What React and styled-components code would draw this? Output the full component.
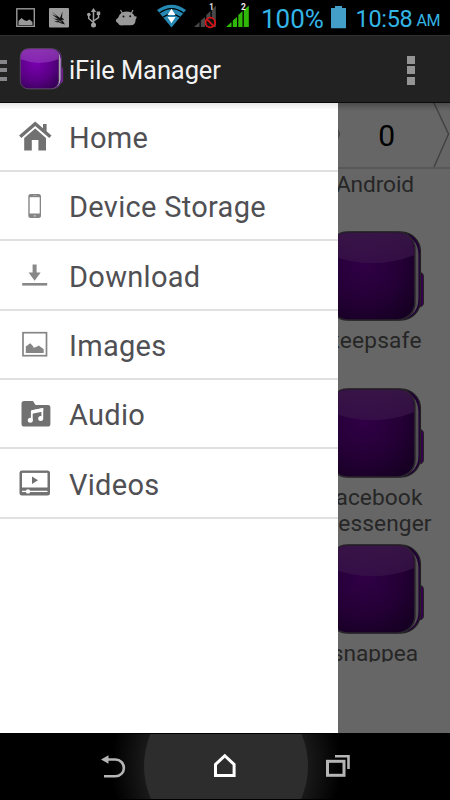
import React from "react";
import styled, { createGlobalStyle } from "styled-components";

const GlobalStyle = createGlobalStyle`
  body {
    margin: 0;
    background: #000;
    font-family: Roboto, "Liberation Sans", sans-serif;
  }
`;

const Screen = styled.div`
  width: 450px;
  height: 800px;
  display: flex;
  flex-direction: column;
  overflow: hidden;
  background: #000;
`;

const StatusBar = styled.div`
  height: 35px;
  display: flex;
  align-items: flex-start;
  background: #000;
`;

const StatusIcon = styled.svg`
  flex: none;
  display: block;
  margin-left: ${({ $left }) => $left}px;
`;

const StatusText = styled.div`
  flex: none;
  width: ${({ $width }) => $width}px;
  margin-left: ${({ $left }) => $left}px;
  padding-top: ${({ $top }) => $top}px;
  font-size: ${({ $size }) => $size}px;
  line-height: 28px;
  letter-spacing: ${({ $spacing }) => $spacing || 0}px;
  white-space: nowrap;
  color: #33b5e5;
`;

const ActionBar = styled.div`
  height: 68px;
  box-sizing: border-box;
  display: flex;
  align-items: center;
  background: #222;
  border-top: 1px solid #303030;
  border-bottom: 1px solid #0a0a0a;
`;

const DrawerHandle = styled.div`
  width: 7px;
  height: 21px;
  margin-right: 11px;
  padding-top: 2px;
  display: flex;
  flex-direction: column;
  justify-content: space-between;

  span {
    height: 4px;
    background: #86868a;
  }
`;

const Title = styled.div`
  flex: 1;
  padding-top: 1px;
  margin-left: 5px;
  font-size: 25.5px;
  letter-spacing: -0.1px;
  white-space: nowrap;
  color: #f3f3f3;
`;

const Overflow = styled.div`
  width: 8px;
  margin: 2px 35px 0 0;
  display: flex;
  flex-direction: column;
  gap: 2.5px;

  span {
    height: 8px;
    background: #949494;
  }
`;

const Content = styled.div`
  position: relative;
  height: 630px;
  display: flex;
  flex-direction: column;
  overflow: hidden;
  background: #fff;
`;

const Breadcrumb = styled.div`
  height: 66px;
  flex: none;
  box-sizing: border-box;
  display: flex;
  justify-content: flex-end;
  align-items: center;
  border-bottom: 2px solid #ddd;
`;

const Chevron = styled.svg`
  flex: none;
  width: 17px;
  height: 64px;
  fill: none;
  stroke: #a5a5a5;
  stroke-width: 1.5;
`;

const Crumb = styled.div`
  margin: 0 38px 0 37px;
  font-size: 30px;
  color: #000;
`;

const Grid = styled.div`
  height: 493px;
  flex: none;
  box-sizing: border-box;
  display: flex;
  flex-direction: column;
  overflow: hidden;
  margin-left: 300px;
  padding-top: 3px;
`;

const GridItem = styled.div`
  flex: none;
  height: ${({ $height }) => $height}px;
  display: flex;
  flex-direction: column;
  align-items: center;

  svg {
    flex: none;
  }
`;

const GridLabel = styled.div`
  padding-top: ${({ $top }) => $top || 0}px;
  font-size: 22.7px;
  line-height: 26px;
  letter-spacing: ${({ $spacing }) => $spacing || 0}px;
  white-space: pre;
  text-align: center;
  color: #606060;
`;

const Scrim = styled.div`
  position: absolute;
  inset: 0;
  background: linear-gradient(rgba(0, 0, 0, 0.25), rgba(0, 0, 0, 0) 8px),
    rgba(0, 0, 0, 0.6);
`;

const Drawer = styled.div`
  position: absolute;
  top: 0;
  left: 0;
  bottom: 0;
  width: 337.5px;
  background: linear-gradient(#e6e6e6, #fff 7px);
`;

const DrawerRow = styled.div`
  height: ${({ $first }) => ($first ? 69 : 69.35)}px;
  box-sizing: border-box;
  display: flex;
  align-items: center;
  border-bottom: 2px solid #e0e0e0;

  svg {
    flex: none;
    width: 36px;
    height: 36px;
    margin: 0 16px 0 17px;
  }
`;

const RowLabel = styled.div`
  padding-top: 3px;
  font-size: 29px;
  letter-spacing: 0.3px;
  white-space: nowrap;
  color: #505054;
`;

const NavBar = styled.div`
  height: 67px;
  background: #000;

  svg {
    display: block;
  }
`;

const PurpleIcon = ({ size, id }) => (
  <svg width={size} height={size} viewBox="0 0 100 100">
    <defs>
      <radialGradient id={id + "body"} cx="0.4" cy="0.35" r="0.75">
        <stop offset="0" stopColor="#7a00b0" />
        <stop offset="0.6" stopColor="#5a0085" />
        <stop offset="1" stopColor="#380058" />
      </radialGradient>
      <linearGradient id={id + "gloss"} x1="0" y1="0" x2="0" y2="1">
        <stop offset="0" stopColor="#9a44bd" />
        <stop offset="1" stopColor="#8a2fb5" />
      </linearGradient>
    </defs>
    <rect x="84" y="46" width="13.5" height="34" rx="4" fill="#8b00be" stroke="#55585a" strokeWidth="1" />
    <rect x="7" y="6" width="87.500" height="87" rx="19" fill="#560089" stroke="#555" strokeWidth="1.200" />
    <path d="M72 8q20 2 20.500 20v44q0 16-16 20h-6z" fill="#cbc6ce" />
    <rect x="5" y="6" width="84" height="87" rx="17" fill={`url(#${id}body)`} stroke="#66596c" strokeWidth="1.500" />
    <path d="M6 29V23Q7 7 23 7h49q15 0 16 16v6Q47 45 6 29z" fill={`url(#${id}gloss)`} opacity="0.75" />
  </svg>
);

const HomeIcon = () => (
  <svg viewBox="0 0 36 36" fill="#717171">
    <path d="M18.200 2.500 26 9.200V5h3.600v7.300l4.900 4.300-2.200 2.400L18.200 7 4.300 19l-2.200-2.400z" />
    <path d="M18.200 9.500 29 19v12.500h-7.600V21h-6.600v10.500H7.200V19z" />
  </svg>
);

const PhoneIcon = () => (
  <svg viewBox="0 0 36 36">
    <rect x="11.300" y="6" width="12.700" height="24" rx="2.500" fill="#858585" />
    <rect x="12.700" y="9.200" width="10" height="16.300" fill="#fff" />
    <rect x="16" y="7.200" width="3.500" height="0.800" fill="#aaa" />
    <rect x="16.500" y="27.200" width="2.500" height="1.300" rx="0.600" fill="#c5c5c5" />
  </svg>
);

const DownloadIcon = () => (
  <svg viewBox="0 0 36 36" fill="#888">
    <path d="M15.600 7.500h4v8h4L17.600 23.700l-6-8.200h4z" />
    <rect x="5.200" y="26" width="25" height="2.600" />
  </svg>
);

const ImageIcon = () => (
  <svg viewBox="0 0 36 36">
    <rect x="6" y="6.700" width="23.500" height="23" fill="#fff" stroke="#858585" strokeWidth="1.700" />
    <path d="M8.800 27v-6.500l4.400-3.200 2.500 2.500 1 2 3-1 2-1.200 5 3.700V27z" fill="#858585" />
  </svg>
);

const AudioIcon = () => (
  <svg viewBox="0 0 36 36">
    <path d="M7 5h9l2.500 4H31q2.400 0 2.400 2.300v16.400Q33.400 30.500 31 30.500H7q-2.500 0-2.500-2.800V7.500Q4.500 5 7 5z" fill="#717171" />
    <path d="M14.800 15.200 25.300 13v9.200M14.800 24V15.200" fill="none" stroke="#fff" strokeWidth="1.800" />
    <path d="M14 14.500 26.200 12v3.500L14 18z" fill="#fff" />
    <circle cx="13.300" cy="24.200" r="2.500" fill="#fff" />
    <circle cx="23.700" cy="22.600" r="2.500" fill="#fff" />
  </svg>
);

const VideoIcon = () => (
  <svg viewBox="0 0 36 36">
    <rect x="2.500" y="5.500" width="30.500" height="25" rx="2.500" fill="#717171" />
    <rect x="5" y="7.900" width="25.500" height="14.600" fill="#fff" />
    <path d="M15 11.400v7.500l6-3.700z" fill="#717171" />
    <path d="M5 26.400h25.500" stroke="#fff" strokeWidth="1.300" />
    <circle cx="11" cy="26.400" r="2.200" fill="#fff" />
  </svg>
);

const menu = [
  { label: "Home", icon: <HomeIcon /> },
  { label: "Device Storage", icon: <PhoneIcon /> },
  { label: "Download", icon: <DownloadIcon /> },
  { label: "Images", icon: <ImageIcon /> },
  { label: "Audio", icon: <AudioIcon /> },
  { label: "Videos", icon: <VideoIcon /> },
];

const App = () => {
  return (
    <>
      <GlobalStyle />
      <Screen>
        <StatusBar>
          <StatusIcon $left={16} width="19" height="35">
            <rect x="0.800" y="8.800" width="17.500" height="17.500" fill="none" stroke="#999" strokeWidth="1.400" />
            <path d="M2.500 25v-4l3-3 2.500 2 2.500 1 3-1.500 3 2.500v3z" fill="#999" />
          </StatusIcon>
          <StatusIcon $left={14} width="20" height="35">
            <rect x="0" y="8" width="20" height="19.500" rx="1" fill="#9d9d9d" />
            <path d="M2.500 11.500 11 18l2.500-6.500-.5 6 2 2-1.500 1 2.500 4-5-1.500-6-1.500 4.500-.5-5-2.500 4.500.5-6-4.500 5 2z" fill="#111" />
            <path d="M6 24.500 14 20M9 19.500l3 3" stroke="#9d9d9d" strokeWidth="0.600" />
          </StatusIcon>
          <StatusIcon $left={18} width="14" height="35" fill="none" stroke="#a2a2a2" strokeWidth="1.500">
            <path d="M6.500 11v13M6.500 22.500 1.700 18.500V15M6.500 21l5-3.500V14" />
            <path d="m3.800 12 2.700-4 2.700 4z" fill="#a2a2a2" stroke="none" />
            <circle cx="6.500" cy="25" r="2.500" fill="#a2a2a2" stroke="none" />
            <circle cx="1.800" cy="14.500" r="1.800" fill="#a2a2a2" stroke="none" />
            <rect x="9.700" y="11.500" width="3.500" height="3.500" fill="#a2a2a2" stroke="none" />
          </StatusIcon>
          <StatusIcon $left={15} width="22" height="35">
            <path d="m4.500 10 2.500 4M17 10l-2 4" stroke="#999" strokeWidth="1.200" />
            <path d="M0 21.500q-.5-2.500 2-3.500Q4 11.500 10.300 11.500q6.200 0 8.500 5 2-1 1.800 1-.2 1-1 2 .2 5.500-5 5.700-4 .3-7.600 0-3.500.8-5-2Z" fill="#999" />
            <circle cx="7.500" cy="16.500" r="1" fill="#111" />
            <circle cx="14.200" cy="16.200" r="1" fill="#111" />
          </StatusIcon>
          <StatusIcon $left={19} width="30" height="35">
            <path d="M0 10Q14.500-.5 29 10L14.500 27.500z" fill="#2589b4" />
            <path d="M2.500 13q12-8.800 24 0M6 17.300q8.500-6.300 17 0" fill="none" stroke="#000" strokeWidth="1.200" />
            <path d="m14.500 8.700 4 6.300h-8zM14.500 23.300l4-6.300h-8z" fill="#fff" />
          </StatusIcon>
          <StatusIcon $left={7} width="26" height="35">
            <path d="M0 27 5.500 22v5zM6.800 20.500 11 17v10H6.800zM12.300 15 16.500 11v16h-4.200zM17.800 10l4-4.500V27h-4z" fill="#484848" />
            <circle cx="16.300" cy="22.500" r="4.800" fill="#111" stroke="#d81418" strokeWidth="1.800" />
            <path d="m13 19.300 6.500 6.500" stroke="#d81418" strokeWidth="1.800" />
            <text x="15" y="10.300" fontSize="8.500" fontWeight="700" fill="#ddd">1</text>
          </StatusIcon>
          <StatusIcon $left={6} width="26" height="35">
            <path d="M0 27 5.500 22v5zM6.800 20.500 11 17v10H6.800zM12.300 15 16.500 11v16h-4.200zM17.800 10l5-4.500V27h-5z" fill="#30b808" />
            <text x="15" y="10.300" fontSize="8.500" fontWeight="700" fill="#eee">2</text>
          </StatusIcon>
          <StatusText $left={9} $width={64} $top={5} $size={26}>100%</StatusText>
          <StatusIcon $left={6} width="16" height="35">
            <path d="M0 8h4V6h7v2h4v20.200H0z" fill="#439fc8" />
          </StatusIcon>
          <StatusText $left={8.5} $width={56} $top={5} $size={23.5} $spacing={-0.3}>10:58</StatusText>
          <StatusText $left={5} $width={26} $top={7} $size={16} $spacing={-0.4}>AM</StatusText>
        </StatusBar>
        <ActionBar>
          <DrawerHandle>
            <span />
            <span />
            <span />
          </DrawerHandle>
          <PurpleIcon size={46} id="app" />
          <Title>iFile Manager</Title>
          <Overflow>
            <span />
            <span />
            <span />
          </Overflow>
        </ActionBar>
        <Content>
          <Breadcrumb>
            <Chevron viewBox="0 0 17 64">
              <path d="M1 0l14.500 31L1 64" />
            </Chevron>
            <Crumb>0</Crumb>
            <Chevron viewBox="0 0 17 64">
              <path d="M1 0l14.500 31L1 64" />
            </Chevron>
          </Breadcrumb>
          <Grid>
            <GridItem $height={54}>
              <GridLabel $spacing={-0.1}>Android</GridLabel>
            </GridItem>
            <GridItem $height={157}>
              <PurpleIcon size={101} id="g1" />
              <GridLabel $top={1} $spacing={0.2}>keepsafe</GridLabel>
            </GridItem>
            <GridItem $height={156}>
              <PurpleIcon size={101} id="g2" />
              <GridLabel $top={1} $spacing={0.1}>{"facebook\nmessenger"}</GridLabel>
            </GridItem>
            <GridItem $height={157}>
              <PurpleIcon size={101} id="g3" />
              <GridLabel $top={1}>snappea</GridLabel>
            </GridItem>
          </Grid>
          <Scrim />
          <Drawer>
            {menu.map((item, i) => (
              <DrawerRow key={item.label} $first={i === 0}>
                {item.icon}
                <RowLabel>{item.label}</RowLabel>
              </DrawerRow>
            ))}
          </Drawer>
        </Content>
        <NavBar>
          <svg width="450" height="67" viewBox="0 0 450 67">
            <defs>
              <radialGradient id="glow" gradientUnits="userSpaceOnUse" cx="226" cy="33" r="115">
                <stop offset="0.700" stopColor="#1a1a1a" />
                <stop offset="1" stopColor="#000" />
              </radialGradient>
            </defs>
            <rect y="1" width="450" height="66" fill="url(#glow)" />
            <circle cx="226" cy="33" r="82" fill="#2d2d2d" />
            <path d="M0 .5h450M0 66.500h450" stroke="#000" />
            <path d="M105 26.500h10.500a8.400 8.400 0 0 1 0 16.800H104" fill="none" stroke="#b5b5b5" strokeWidth="2.600" />
            <path d="M101 26.500l7.500-4.200v8.400z" fill="#b5b5b5" />
            <path d="M215.500 42.500V31.500l9.300-8.800 9.300 8.800v11z" fill="none" stroke="#fff" strokeWidth="3" />
            <rect x="327.500" y="28.300" width="16.500" height="14" fill="none" stroke="#b5b5b5" strokeWidth="3" />
            <path d="M335 23.300h13.500V36" fill="none" stroke="#b5b5b5" strokeWidth="2.600" />
          </svg>
        </NavBar>
      </Screen>
    </>
  );
};

export default App;
